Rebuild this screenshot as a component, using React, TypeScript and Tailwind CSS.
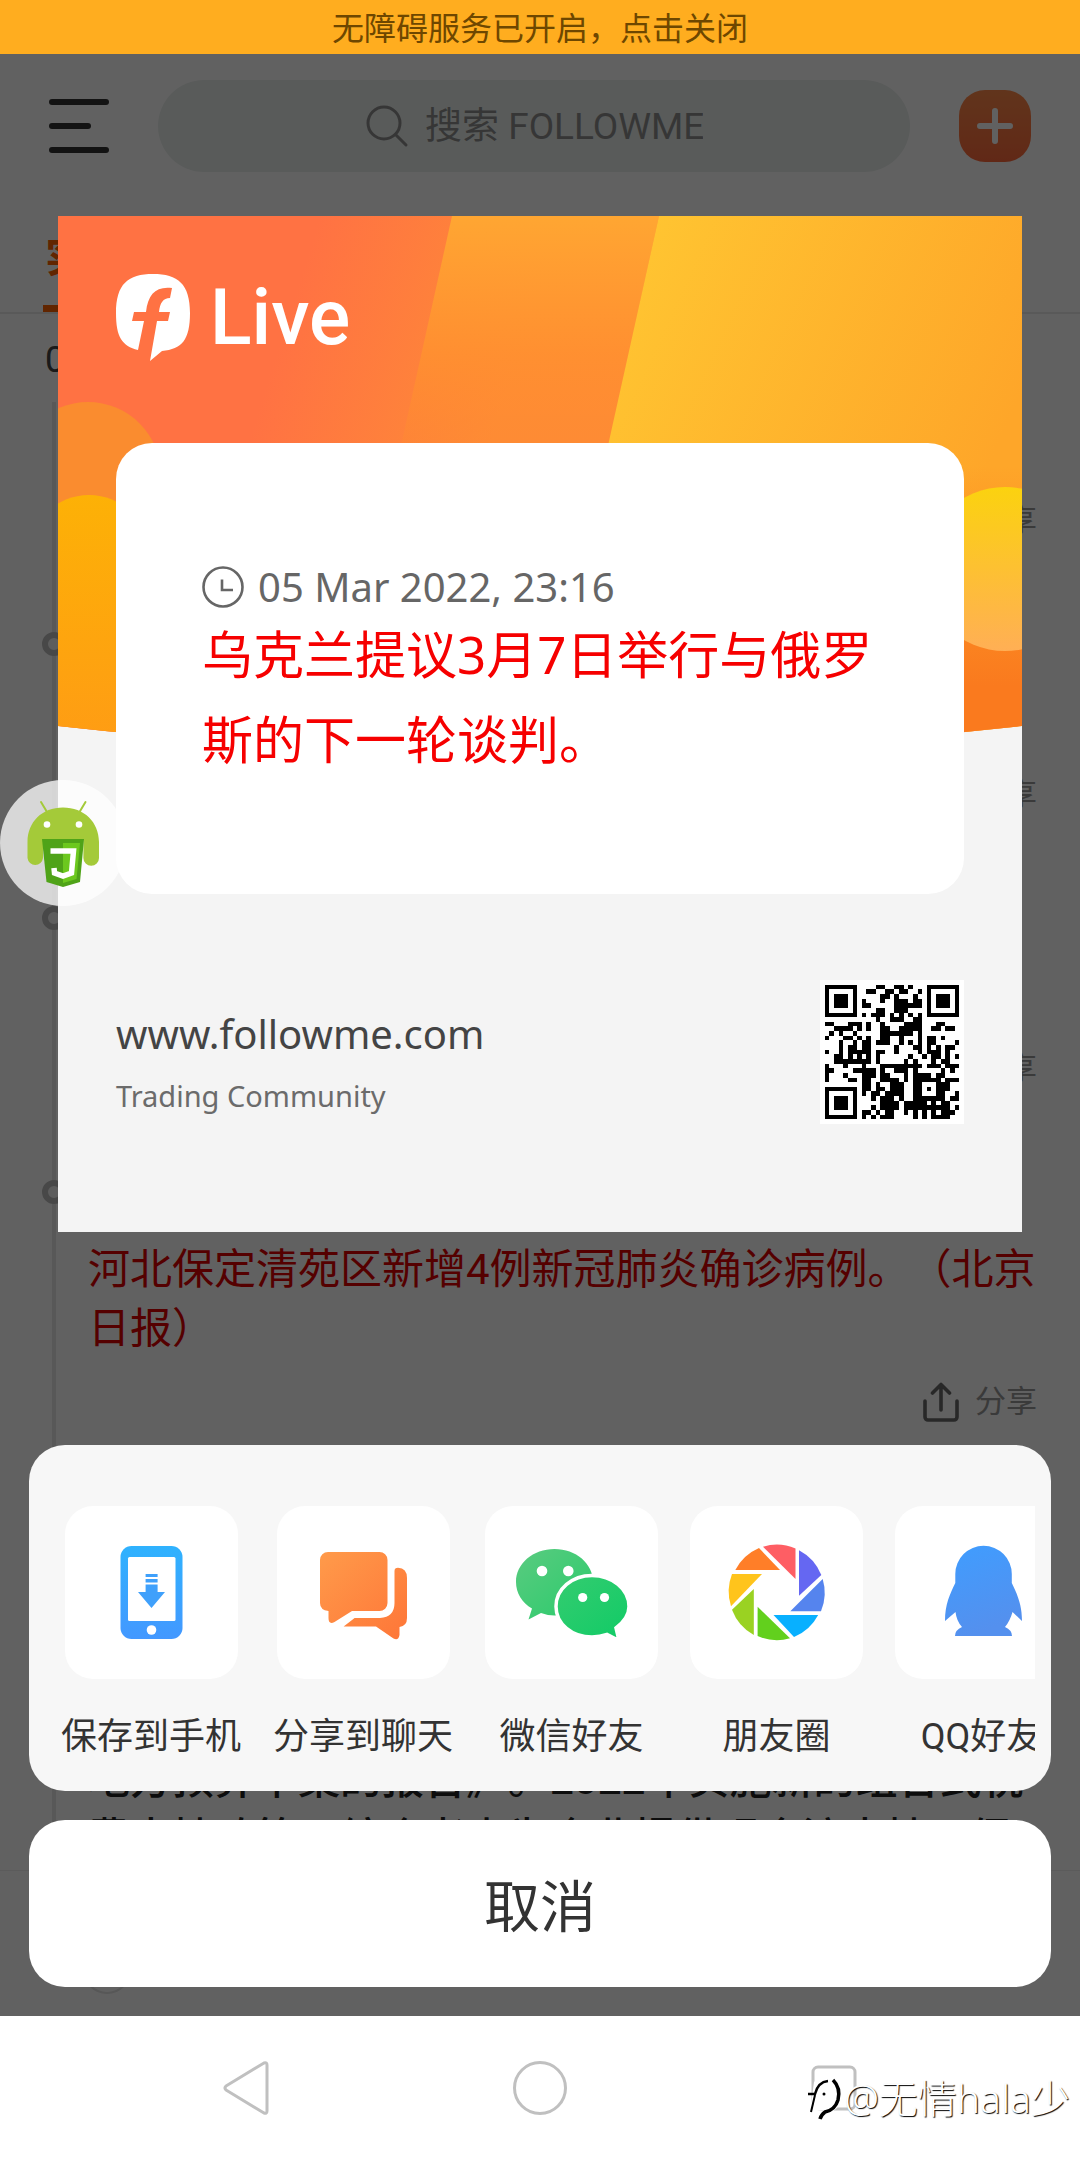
import React from "react";

const QR_ROWS = [
  "#######....##..##.#...#######",
  "#.....#..##..##.##..#.#.....#",
  "#.###.#.....##.#...#..#.###.#",
  "#.###.#.#...#..###.##.#.###.#",
  "#.###.#.##.....######.#.###.#",
  "#.....#....##..###....#.....#",
  "#######.#.###.#.#.#.#.#######",
  "...........#..###..##........",
  "##...###.#..#....####...##...",
  "..####.#.#..##..#####..##.##.",
  ".#.#..#.....#######.#........",
  "#...##.#.#..##..#...#.##.#...",
  "...#..#.##.###..#.#.#.##....#",
  "...#.##.##.....#...##.#.#.##.",
  "#..#.#####.##..#....#.###.#..",
  "..##.#.#.#.#......#..#.##.#.#",
  "..########.#.....#.#...#.##..",
  "#...#...#...#########.###.###",
  "##....#####.#..###.#.....#.#.",
  "#...#...###.##...#.####.##...",
  "#....##.##..####.#.######.###",
  "........##.#..###..##...###..",
  "#######.##.##.###..##.#.###..",
  "#.....#.#.##.####..##...##..#",
  "#.###.#...#.###.#..#######.##",
  "#.###.#.....####.#####.#.##..",
  "#.###.#...#.####.##########.#",
  "#.....#.##.#.##..#.#.#.#.###.",
  "#######.#.#.###....#.#.####..",
];

function QrCode() {
  const d = QR_ROWS.map((row, y) =>
    row
      .split("")
      .map((c, x) => (c === "#" ? `M${x} ${y}h1v1h-1z` : ""))
      .join("")
  ).join("");
  return (
    <svg viewBox="-1 -1 31 31" className="size-36 bg-white" shapeRendering="crispEdges" role="img" aria-label="QR">
      <path d={d} fill="#000" />
    </svg>
  );
}

function ShareMark() {
  return (
    <svg viewBox="0 0 36 40" className="h-10 w-9" fill="none" stroke="#6a6a6a" strokeWidth="3.6" strokeLinecap="round" strokeLinejoin="round">
      <path d="M2 19V35a3 3 0 0 0 3 3H31a3 3 0 0 0 3-3V19M18 28V3M9.500 11L18 2.500L26.500 11" />
    </svg>
  );
}

type Item = { node: boolean; text?: string; className: string };

const ITEMS: Item[] = [
  { node: false, className: "text-[#e00000]" },
  { node: true, className: "text-[#e00000]" },
  { node: true, className: "text-[#e00000]" },
  { node: true, text: "河北保定清苑区新增4例新冠肺炎确诊病例。（北京日报）", className: "text-[#e00000]" },
  {
    node: true,
    text: "地方预算草案的报告》。2022年实施新的组合式税费支持政策。综合考虑为企业提供现金流支持。促",
    className: "pt-[177px] font-medium text-[#222]",
  },
];

function Timeline() {
  return (
    <ul className="ml-[52px] border-l-4 border-[#e8e8e8] pt-4">
      {ITEMS.map((item, i) => (
        <li key={i} className="pb-[75px] pl-8">
          {item.node && (
            <div className="relative mb-6 flex h-12 items-center">
              <span className="absolute -left-[46px] size-6 rounded-full border-[6px] border-[#bdbdbd] bg-[#f5f5f5]" />
            </div>
          )}
          <p className={`min-h-[59px] pr-6 text-[42px] leading-[59px] [text-spacing-trim:space-all] ${item.className}`}>{item.text}</p>
          <div className="mt-5 flex justify-end pr-[43px]">
            <button className="flex h-12 items-center gap-4 text-[31px] text-[#999]">
              <ShareMark />
              分享
            </button>
          </div>
        </li>
      ))}
    </ul>
  );
}

function BackPage() {
  return (
    <div className="flex min-w-0 flex-col overflow-hidden bg-white [grid-area:1/1]">
      <header className="flex h-36 shrink-0 items-center justify-between pr-[49px] pl-[49px]">
        <button aria-label="菜单" className="flex w-15 flex-col gap-[18px]">
          <span className="h-1.5 w-15 rounded-full bg-[#333]" />
          <span className="h-1.5 w-[42px] rounded-full bg-[#333]" />
          <span className="h-1.5 w-15 rounded-full bg-[#333]" />
        </button>
        <label className="mx-[49px] flex h-[92px] flex-1 items-center justify-center gap-4 rounded-full bg-[#eaefed]">
          <svg viewBox="0 0 44 44" className="size-11" fill="none" stroke="#8f8f8f" strokeWidth="3" strokeLinecap="round">
            <circle cx="19" cy="19" r="16" />
            <path d="M30.500 30.500L41 41" />
          </svg>
          <input aria-label="搜索" placeholder="搜索 FOLLOWME" className="w-[278px] bg-transparent pt-0.5 text-[37px] outline-none placeholder:text-[#8f8f8f]" />
        </label>
        <button aria-label="添加" className="flex size-[72px] items-center justify-center rounded-[26px] bg-linear-to-b from-[#ff8a4a] to-[#ff6a3c]">
          <svg viewBox="0 0 36 36" className="size-9" fill="none" stroke="#fff" strokeWidth="6" strokeLinecap="round">
            <path d="M3 18H33M18 3V33" />
          </svg>
        </button>
      </header>
      <nav className="flex h-[116px] shrink-0 items-end border-b-2 border-[#ebebeb] px-[43px]">
        <a href="#live" className="flex h-full flex-col border-b-[7px] border-[#ff6200] px-0.5 pt-7 text-[42px] font-bold text-[#ff6200]">
          实时
        </a>
      </nav>
      <div className="flex h-[88px] shrink-0 items-center px-[45px] pt-1 text-[36px] text-[#444]">05 Mar 2022</div>
      <div className="flex-1 overflow-hidden [contain:size]">
        <Timeline />
      </div>
      <div className="flex h-[146px] shrink-0 items-end border-t border-[#f0f0f0] bg-white px-[83px] pb-[22px]">
        <span className="size-12 rounded-full border-2 border-[#e4e4e4]" />
      </div>
    </div>
  );
}

function PosterArt() {
  return (
    <svg viewBox="0 0 964 545" className="absolute inset-x-0 top-0 w-full">
      <defs>
        <clipPath id="hero"><path d="M0 0H964V510Q482 564 0 510Z" /></clipPath>
        <linearGradient id="base" gradientUnits="userSpaceOnUse" x1="230" y1="100" x2="450" y2="170">
          <stop offset="0" stopColor="#ff7243" />
          <stop offset="1" stopColor="#fe8b36" />
        </linearGradient>
        <linearGradient id="mid" gradientUnits="userSpaceOnUse" x1="0" y1="0" x2="0" y2="230">
          <stop offset="0" stopColor="#ffa632" />
          <stop offset="0.6" stopColor="#ff9030" stopOpacity="0.9" />
          <stop offset="1" stopColor="#ff8b30" stopOpacity="0.3" />
        </linearGradient>
        <linearGradient id="gold" gradientUnits="userSpaceOnUse" x1="570" y1="60" x2="940" y2="230">
          <stop offset="0" stopColor="#ffc431" />
          <stop offset="1" stopColor="#fea629" />
        </linearGradient>
        <linearGradient id="deep" gradientUnits="userSpaceOnUse" x1="0" y1="250" x2="0" y2="470">
          <stop offset="0" stopColor="#fa7a1e" stopOpacity="0" />
          <stop offset="1" stopColor="#fa7a1e" />
        </linearGradient>
        <linearGradient id="pill" x1="0" y1="0" x2="0" y2="1">
          <stop offset="0" stopColor="#fdb106" />
          <stop offset="1" stopColor="#ff9618" />
        </linearGradient>
        <linearGradient id="sun" x1="0" y1="0" x2="0" y2="1">
          <stop offset="0" stopColor="#fbd20f" />
          <stop offset="1" stopColor="#ffaf55" />
        </linearGradient>
      </defs>
      <g clipPath="url(#hero)">
        <rect width="964" height="545" fill="url(#base)" />
        <path d="M394 0H601L480 545H273Z" fill="url(#mid)" />
        <path d="M601 0H964V545H480Z" fill="url(#gold)" />
        <path d="M601 0H964V545H480Z" fill="url(#deep)" />
        <rect x="-43" y="186" width="146" height="400" rx="73" fill="#fa8c2f" />
        <rect x="-29" y="279" width="120" height="320" rx="60" fill="url(#pill)" />
        <circle cx="947" cy="353" r="82" fill="url(#sun)" />
      </g>
    </svg>
  );
}

function Poster() {
  return (
    <section className="relative mx-[58px] overflow-hidden bg-[#f4f4f4] font-['Noto_Sans','Noto_Sans_CJK_SC',sans-serif]">
      <PosterArt />
      <div className="relative flex flex-col px-[58px] pb-[108px]">
        <div className="flex h-[227px] items-start gap-5 pt-[58px]">
          <svg viewBox="0 0 74 88" className="h-[88px] w-[74px]">
            <path fill="#fff" fillRule="evenodd" d="M37 0C62 0 74 10 74 39C74 66 66 75 46 77L34 87L41 47H52L54 38H43C44 29 47 24 54 24L56 14C40 12 32 20 30 38H18L16 47H28L22 76C6 72 0 63 0 39C0 10 12 0 37 0Z" />
          </svg>
          <h1 className="font-['Roboto',sans-serif] text-[77px] leading-[88px] font-medium text-white">Live</h1>
        </div>
        <article className="rounded-[36px] bg-white pt-[118px] pr-20 pb-[112px] pl-[86px]">
          <div className="flex h-[51px] items-center gap-[14px] text-[40px] text-[#666]">
            <svg viewBox="0 0 42 42" className="size-[42px]" fill="none" stroke="#666" strokeWidth="2.6">
              <circle cx="21" cy="21" r="19.500" />
              <path d="M20 13.500V24H31" />
            </svg>
            <time>05 Mar 2022, 23:16</time>
          </div>
          <p className="text-[51px] leading-[85px] text-[#f60000]">乌克兰提议3月7日举行与俄罗斯的下一轮谈判。</p>
        </article>
        <footer className="flex items-end justify-between pt-[86px]">
          <div className="flex flex-col gap-2 pb-0.5">
            <a href="#site" className="text-[40px] leading-[56px] text-[#444]">www.followme.com</a>
            <span className="text-[29px] leading-[52px] text-[#6b6b6b]">Trading Community</span>
          </div>
          <QrCode />
        </footer>
      </div>
    </section>
  );
}

function SaveIcon() {
  return (
    <svg viewBox="0 0 173 173">
      <defs>
        <linearGradient id="save" gradientUnits="userSpaceOnUse" x1="86" y1="40" x2="86" y2="133">
          <stop offset="0" stopColor="#2fb2fe" />
          <stop offset="1" stopColor="#4398ff" />
        </linearGradient>
      </defs>
      <rect x="55.500" y="40" width="62" height="93" rx="11" fill="url(#save)" />
      <rect x="63" y="51" width="47.500" height="64" rx="1.500" fill="#fff" />
      <circle cx="86.500" cy="124" r="4.800" fill="#fff" />
      <path fill="#3fa0fb" d="M80.600 68h12v3h-12zM80.600 73h12v3.500h-12zM80.600 78.500h12V86H100L86.500 102L73 86h7.600z" />
    </svg>
  );
}

function ChatIcon() {
  return (
    <svg viewBox="0 0 173 173">
      <defs>
        <linearGradient id="chat" gradientUnits="userSpaceOnUse" x1="45" y1="46" x2="128" y2="133">
          <stop offset="0" stopColor="#ff9a4a" />
          <stop offset="1" stopColor="#fe7638" />
        </linearGradient>
      </defs>
      <g fill="url(#chat)">
        <path d="M51 46H102.500a8 8 0 0 1 8 8V97a8 8 0 0 1-8 8H75L57.500 116q-6 3-6-4V105Q43 104 43 97V54a8 8 0 0 1 8-8Z" />
        <path d="M117.500 65q0-3.300 3.500-3.300Q130 62 130 72V112q0 8-7.500 9V129q-1 6-6 3.500L99 120.500H66.600L77.600 112H103q14.500-1 14.500-15Z" />
      </g>
    </svg>
  );
}

function WechatIcon() {
  return (
    <svg viewBox="0 0 173 173">
      <defs>
        <linearGradient id="wx1" x1="0" y1="0" x2="1" y2="1">
          <stop offset="0" stopColor="#5acb80" />
          <stop offset="1" stopColor="#2acb6b" />
        </linearGradient>
        <linearGradient id="wx2" x1="0" y1="0" x2="1" y2="1">
          <stop offset="0" stopColor="#35cc70" />
          <stop offset="1" stopColor="#10cb66" />
        </linearGradient>
      </defs>
      <path fill="url(#wx1)" d="M69.500 43C91 43 108 57.500 108 76S91 109.500 69.500 109.500Q63 109.500 56 107L43.500 113.500L47 102.500C37 97 31 87 31 76C31 57.500 48 43 69.500 43Z" />
      <path fill="url(#wx2)" stroke="#fff" strokeWidth="3.500" d="M107 69.500C127 69.500 144 83 144 100.500Q144 112 131 122L134 134.500L122 128.500Q115 131 107 131C87 131 71 118 71 100.500S87 69.500 107 69.500Z" />
      <g fill="#fff">
        <circle cx="57" cy="65" r="5.300" />
        <circle cx="83.300" cy="65" r="5.300" />
        <circle cx="97.700" cy="91.500" r="4.600" />
        <circle cx="119.500" cy="91.500" r="4.600" />
      </g>
    </svg>
  );
}

function MomentsIcon() {
  return (
    <svg viewBox="0 0 173 173">
      <path fill="#fe5e64" d="M73 40.700A48.300 48.300 0 0 1 105.500 42.500V73Z" />
      <path fill="#6567f2" d="M109 44.300A48.300 48.300 0 0 1 131.300 69L109 89.700Z" />
      <path fill="#5584ee" d="M132.700 73A48.300 48.300 0 0 1 131 105.300H100.300Z" />
      <path fill="#08b0ff" d="M128.200 109A48.300 48.300 0 0 1 104 131L83.500 109Z" />
      <path fill="#62d01d" d="M100 132.300A48.300 48.300 0 0 1 67.600 130V100.700Z" />
      <path fill="#9ad222" d="M63.800 129A48.300 48.300 0 0 1 42 103.700L63.800 83Z" />
      <path fill="#ffc41c" d="M41 100.300A48.300 48.300 0 0 1 42 68H72Z" />
      <path fill="#ff7e28" d="M45.300 64A48.300 48.300 0 0 1 69 42L90 64Z" />
    </svg>
  );
}

function QqIcon() {
  return (
    <svg viewBox="0 0 173 173">
      <defs>
        <linearGradient id="qq" x1="0" y1="0" x2="0.300" y2="1">
          <stop offset="0" stopColor="#3f9dff" />
          <stop offset="1" stopColor="#5490ee" />
        </linearGradient>
      </defs>
      <path fill="url(#qq)" d="M60.300 68A28.200 28.200 0 0 1 116.800 68V77C122 88 127 98 127 115L117.500 106Q115 115 110 121Q117 124 117 130H60Q60 124 67 121Q61.500 115 60.500 106L50 115C50 98 55 88 60.300 77Z" />
    </svg>
  );
}

const TARGETS = [
  { label: "保存到手机", Icon: SaveIcon },
  { label: "分享到聊天", Icon: ChatIcon },
  { label: "微信好友", Icon: WechatIcon },
  { label: "朋友圈", Icon: MomentsIcon },
  { label: "QQ好友", Icon: QqIcon },
];

function ShareSheet() {
  return (
    <div className="mx-[29px] mt-auto mb-[29px] flex flex-col gap-[29px]">
      <div className="rounded-[36px] bg-[#f7f7f7] pt-[61px] pr-4 pb-[27px] pl-8">
        <div className="flex gap-8 overflow-hidden">
          {TARGETS.map(({ label, Icon }) => (
            <button key={label} className="flex shrink-0 flex-col items-center gap-[31px] text-[36px] leading-[54px] text-[#333]">
              <span className="size-[173px] rounded-[28px] bg-white">
                <Icon />
              </span>
              {label}
            </button>
          ))}
        </div>
      </div>
      <button className="h-[167px] rounded-[36px] bg-white pt-2 text-[56px] text-[#333]">取消</button>
    </div>
  );
}

function FloatingBall() {
  return (
    <button aria-label="脚本助手" className="absolute top-[726px] left-0 size-[126px] rounded-full bg-white/75">
      <svg viewBox="0 0 126 126">
        <g stroke="#a4ca39" strokeWidth="2" strokeLinecap="round">
          <path d="M41 22L47 32M85.500 22L79.500 32" />
        </g>
        <path fill="#a4ca39" d="M27.500 62C27.500 42 42 27.500 63 27.500S99 42 99 62V78a7.800 7.800 0 0 1-15.600 0V60H43V78a7.800 7.800 0 0 1-15.500 0Z" />
        <circle cx="47" cy="44.500" r="3.300" fill="#fff" />
        <circle cx="79" cy="44.500" r="3.300" fill="#fff" />
        <path fill="#4fa318" d="M42 59H84L80 102L63 107L46.500 102Z" />
        <path fill="#6cc81e" d="M63 63H80L76.500 99L63 103Z" />
        <path fill="none" stroke="#fff" strokeWidth="5.500" d="M50.500 71H73.500L71.500 93L63 96L54.500 93L54 88" />
      </svg>
    </button>
  );
}

function SystemNav() {
  return (
    <nav className="relative flex h-36 shrink-0 items-center justify-between bg-white px-[218px]">
      <button aria-label="返回">
        <svg viewBox="0 0 56 56" className="size-14" fill="none" stroke="#c0c0c0" strokeWidth="3" strokeLinejoin="round">
          <path d="M46 3Q49 2 49 5V51Q49 54 46 53L8 30Q6 28 8 26Z" />
        </svg>
      </button>
      <button aria-label="主页">
        <svg viewBox="0 0 56 56" className="size-14" fill="none" stroke="#c0c0c0" strokeWidth="3">
          <circle cx="28" cy="28" r="25.500" />
        </svg>
      </button>
      <button aria-label="最近任务">
        <svg viewBox="0 0 56 56" className="size-14" fill="none" stroke="#c0c0c0" strokeWidth="3">
          <rect x="7" y="7" width="42" height="42" rx="5" />
        </svg>
      </button>
      <div className="absolute right-[10px] bottom-[36px] flex items-center font-['Noto_Sans','Noto_Sans_CJK_SC',sans-serif] text-[39px] leading-[52px] font-light text-white [text-shadow:1px_1px_1px_#000]">
        <svg viewBox="0 0 38 48" className="h-12 w-[38px]">
          <path d="M8 8Q14 2 22 3Q36 6 35 22Q34 37 22 38L15 44L17 36L4 38Z" fill="#fff" />
          <path d="M2 20H9Q12 8 22 7" fill="none" stroke="#000" strokeWidth="2.500" />
          <path d="M9 21L5 38" fill="none" stroke="#000" strokeWidth="2" />
          <path d="M27 6Q35 14 32 26Q29 36 19 38Q15 41 14 45" fill="none" stroke="#000" strokeWidth="3.500" />
          <circle cx="18" cy="20" r="1.500" />
        </svg>
        @无情hala少
      </div>
    </nav>
  );
}

export default function App() {
  return (
    <div className="flex min-h-screen flex-col font-['Roboto','Noto_Sans_CJK_SC',sans-serif]">
      <button className="h-[54px] shrink-0 bg-[#ffad1f] pt-1 text-[32px] leading-[50px] text-[#6e4700]">无障碍服务已开启，点击关闭</button>
      <main className="relative grid flex-1">
        <BackPage />
        <div role="dialog" aria-label="分享" className="z-10 flex min-w-0 flex-col bg-black/62 pt-[162px] [grid-area:1/1]">
          <Poster />
          <ShareSheet />
        </div>
        <div className="absolute z-20">
          <FloatingBall />
        </div>
      </main>
      <SystemNav />
    </div>
  );
}
